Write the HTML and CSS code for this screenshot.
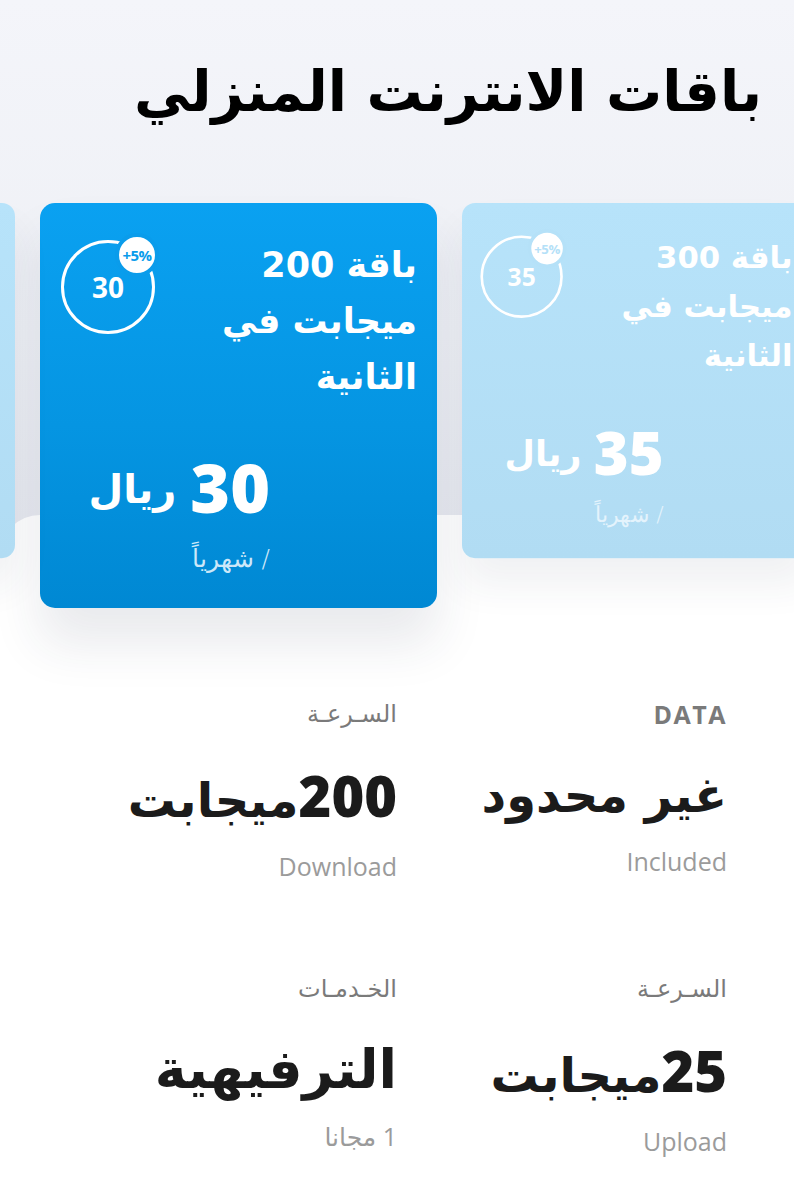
FILE: index.html
```html
<!DOCTYPE html>
<html lang="ar">
<head>
<meta charset="utf-8">
<title>باقات الانترنت المنزلي</title>
<link rel="stylesheet" href="styles.css">
</head>
<body>
<div class="page">
  <section class="hero">
    <h1 class="title">باقات الانترنت المنزلي</h1>
    <div class="carousel">
      <div class="track">
        <article class="card card-side card-prev" aria-hidden="true"></article>
        <article class="card card-active">
          <div class="card-top">
            <div class="card-name">باقة 200<br>ميجابت في<br>الثانية</div>
            <div class="ring">
              <svg viewBox="0 0 110 110" width="110" height="110">
                <circle class="ring-line" cx="55" cy="59" r="45.5"/>
                <circle class="ring-badge" cx="84" cy="27" r="20"/>
              </svg>
              <span class="ring-num">30</span>
              <span class="ring-pct">+5%</span>
            </div>
          </div>
          <div class="card-price">
            <div class="price"><span class="price-num">30</span><span class="price-cur">ريال</span></div>
            <div class="period">/ شهرياً</div>
          </div>
        </article>
        <article class="card card-side card-next">
          <div class="card-top">
            <div class="card-name">باقة 300<br>ميجابت في<br>الثانية</div>
            <div class="ring">
              <svg viewBox="0 0 110 110" width="110" height="110">
                <circle class="ring-line" cx="55" cy="59" r="45.5"/>
                <circle class="ring-badge" cx="84" cy="27" r="20"/>
              </svg>
              <span class="ring-num">35</span>
              <span class="ring-pct">+5%</span>
            </div>
          </div>
          <div class="card-price">
            <div class="price"><span class="price-num">35</span><span class="price-cur">ريال</span></div>
            <div class="period">/ شهرياً</div>
          </div>
        </article>
      </div>
    </div>
  </section>

  <section class="details">
    <div class="spec">
      <div class="spec-label latin">DATA</div>
      <div class="spec-value">غير محدود</div>
      <div class="spec-sub">Included</div>
    </div>
    <div class="spec">
      <div class="spec-label">السـرعـة</div>
      <div class="spec-value"><span class="num">200</span>ميجابت</div>
      <div class="spec-sub">Download</div>
    </div>
    <div class="spec">
      <div class="spec-label">السـرعـة</div>
      <div class="spec-value"><span class="num">25</span>ميجابت</div>
      <div class="spec-sub">Upload</div>
    </div>
    <div class="spec">
      <div class="spec-label">الخـدمـات</div>
      <div class="spec-value spec-value-lg">الترفيهية</div>
      <div class="spec-sub">1 مجانا</div>
    </div>
  </section>
</div>
</body>
</html>
```

FILE: styles.css
```css
* { box-sizing: border-box; }

html, body {
  margin: 0;
  padding: 0;
  background: #ffffff;
}

body {
  font-family: "DejaVu Sans", "Noto Sans", sans-serif;
  color: #1a1a1a;
}

.page {
  width: 794px;
  min-height: 1200px;
  overflow: hidden;
  background: #ffffff;
}

.hero {
  background: linear-gradient(to bottom, #f4f5fa 0%, #eef0f5 55%, #e5e7ee 100%);
  padding-top: 42px;
}

.title {
  direction: rtl;
  margin: 0;
  padding: 0 32px 0 0;
  font-family: "DejaVu Sans", serif;
  font-weight: 700;
  font-size: 56px;
  line-height: 100px;
  height: 100px;
  color: #000;
  text-align: right;
  white-space: nowrap;
}

.carousel {
  margin-top: 61px;
  position: relative;
  z-index: 1;
  height: 405px;
  margin-bottom: -93px;
}

.track {
  display: flex;
  align-items: flex-start;
  gap: 25px;
  margin-left: -382px;
  width: 1300px;
}

.card {
  direction: rtl;
  flex: 0 0 397px;
  width: 397px;
  height: 405px;
  border-radius: 15px;
  padding: 34px 20px 0 20px;
  display: flex;
  flex-direction: column;
  color: #fff;
  --cut: #0a9ceb;
}

.card-active {
  background: linear-gradient(to bottom, #0aa1f1 0%, #0595e2 55%, #0088d3 100%);
  box-shadow: 0 36px 50px rgba(40, 50, 80, 0.10);
}

.card-side {
  transform: scale(0.877);
  background: linear-gradient(to bottom, #b7e3fa 0%, #b1dcf3 100%);
  box-shadow: 0 30px 44px rgba(40, 50, 80, 0.07);
  --cut: #b5e1f8;
}

.card-prev { transform-origin: top right; }
.card-next { transform-origin: top left; }

.card-top {
  display: flex;
  justify-content: space-between;
  align-items: flex-start;
}

.card-name {
  font-weight: 700;
  font-size: 35px;
  line-height: 56px;
  text-align: right;
}

.ring {
  position: relative;
  width: 110px;
  height: 110px;
  margin-left: -7px;
  margin-top: -9px;
  flex: none;
}

.ring svg { display: block; }

.ring-line {
  fill: none;
  stroke: #ffffff;
  stroke-width: 3;
}

.ring-badge {
  fill: #ffffff;
  stroke: var(--cut);
  stroke-width: 4;
}

.ring-num {
  position: absolute;
  left: 0;
  width: 110px;
  top: 43px;
  text-align: center;
  font-family: "Open Sans", sans-serif;
  font-weight: 700;
  font-size: 28px;
  line-height: 32px;
  direction: ltr;
}

.ring-pct {
  position: absolute;
  left: 64px;
  width: 40px;
  top: 16px;
  text-align: center;
  font-family: "Open Sans", sans-serif;
  font-weight: 700;
  font-size: 15px;
  line-height: 22px;
  letter-spacing: -0.5px;
  color: var(--cut);
  direction: ltr;
}

.card-price {
  margin-top: 42px;
  padding-right: 147px;
  display: flex;
  flex-direction: column;
  align-items: flex-start;
}

.price {
  display: flex;
  align-items: center;
  gap: 14px;
  font-weight: 700;
  height: 80px;
  white-space: nowrap;
}

.price-num {
  font-family: "Open Sans", sans-serif;
  font-size: 68px;
  font-weight: 800;
  line-height: 80px;
  direction: ltr;
}

.price-cur {
  font-size: 40px;
  line-height: 60px;
  margin-top: 4px;
}

.period {
  margin-top: 16px;
  font-size: 25px;
  font-weight: 300;
  line-height: 32px;
  color: #cde8f9;
}

.card-side .period { color: #e4f3fc; }

.details {
  position: relative;
  background: #ffffff;
  border-radius: 40px 40px 0 0;
  padding: 184px 67px 40px 67px;
  direction: rtl;
  display: grid;
  grid-template-columns: 1fr 1fr;
  row-gap: 92px;
}

.spec {
  text-align: right;
}

.spec-label {
  font-size: 24px;
  line-height: 30px;
  color: #7a7a7a;
}

.spec-label.latin {
  font-family: "Open Sans", sans-serif;
  font-weight: 700;
  font-size: 25px;
  letter-spacing: 1.5px;
}

.spec-value {
  margin-top: 28px;
  font-weight: 700;
  font-size: 48px;
  line-height: 76px;
  color: #1b1b1b;
  white-space: nowrap;
}

.spec-value-lg {
  font-size: 54px;
}

.spec-value .num {
  font-family: "Open Sans", sans-serif;
  font-size: 56px;
  font-weight: 800;
}

.spec-sub {
  margin-top: 12px;
  font-family: "Open Sans", "DejaVu Sans", sans-serif;
  font-size: 25px;
  line-height: 32px;
  color: #9b9b9b;
}
```
